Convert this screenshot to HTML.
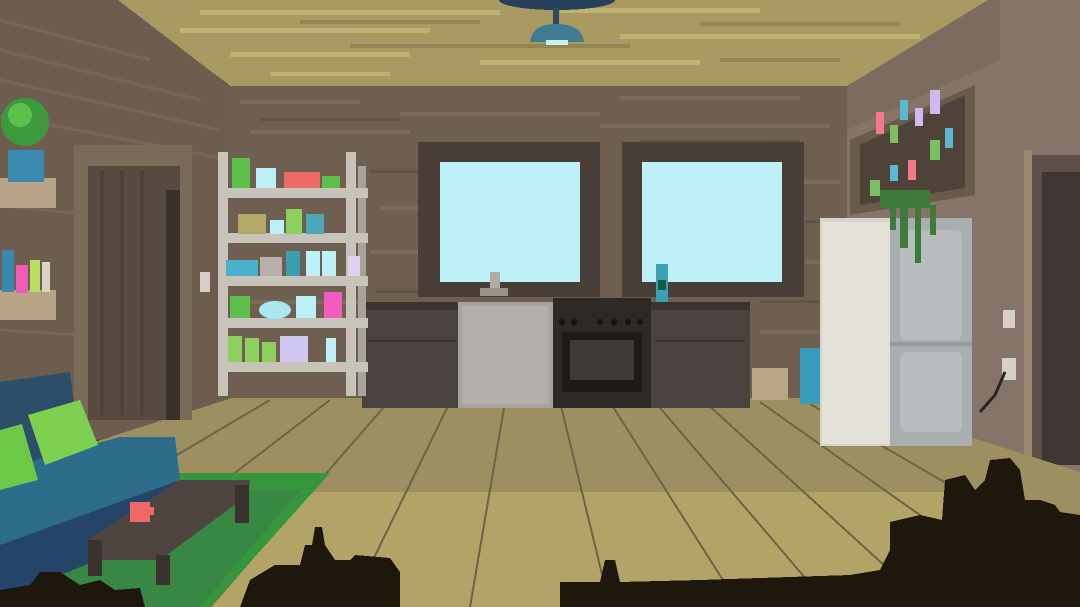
<!DOCTYPE html>
<html><head><meta charset="utf-8"><style>html,body{margin:0;padding:0;background:#000;overflow:hidden}svg{display:block}</style></head>
<body>
<svg width="1080" height="607" viewBox="0 0 1080 607" xmlns="http://www.w3.org/2000/svg" shape-rendering="crispEdges">
<!-- left wall -->
<polygon points="0,0 120,0 232,88 232,400 0,470" fill="#6c5d4f"/>
<g stroke="#7f6e5a" stroke-width="3" opacity="0.7">
<line x1="0" y1="20" x2="150" y2="60"/><line x1="0" y1="50" x2="200" y2="100"/><line x1="0" y1="80" x2="220" y2="130"/><line x1="0" y1="115" x2="230" y2="160"/><line x1="0" y1="205" x2="90" y2="215"/><line x1="0" y1="330" x2="80" y2="335"/>
</g>
<!-- back wall -->
<rect x="230" y="85" width="617" height="318" fill="#6e5f50"/>
<g fill="#806f5c" opacity="0.8">
<rect x="240" y="100" width="120" height="4"/><rect x="400" y="112" width="200" height="4"/><rect x="620" y="96" width="180" height="4"/><rect x="250" y="130" width="160" height="4"/><rect x="600" y="124" width="230" height="4"/><rect x="380" y="206" width="40" height="4"/><rect x="800" y="180" width="40" height="4"/><rect x="370" y="250" width="50" height="4"/><rect x="805" y="260" width="40" height="4"/><rect x="250" y="300" width="110" height="4"/><rect x="760" y="330" width="80" height="4"/>
</g>
<g fill="#5e5044" opacity="0.8">
<rect x="260" y="118" width="140" height="3"/><rect x="640" y="140" width="160" height="3"/><rect x="370" y="170" width="50" height="3"/><rect x="805" y="220" width="40" height="3"/><rect x="375" y="290" width="45" height="3"/><rect x="760" y="300" width="60" height="3"/>
</g>
<!-- right wall -->
<polygon points="985,0 1080,0 1080,475 847,402 847,85" fill="#857467"/>
<polygon points="847,85 985,0 1000,0 1000,60 847,130" fill="#7c6c60"/>
<rect x="1028" y="155" width="52" height="310" fill="#5e5048"/>
<rect x="1042" y="172" width="38" height="293" fill="#3e3632"/>
<rect x="1024" y="150" width="8" height="320" fill="#9a876f"/>
<!-- ceiling -->
<polygon points="118,0 988,0 847,86 230,86" fill="#a89a60"/>
<g fill="#c0b274">
<rect x="200" y="10" width="300" height="5"/><rect x="560" y="8" width="200" height="5"/><rect x="180" y="28" width="250" height="5"/><rect x="620" y="34" width="300" height="5"/><rect x="230" y="52" width="180" height="5"/><rect x="480" y="60" width="220" height="5"/><rect x="270" y="72" width="120" height="4"/>
</g>
<g fill="#938553">
<rect x="300" y="20" width="180" height="4"/><rect x="700" y="22" width="200" height="4"/><rect x="350" y="44" width="280" height="4"/><rect x="720" y="58" width="120" height="4"/>
</g>
<!-- lamp -->
<ellipse cx="557" cy="0" rx="58" ry="10" fill="#26405c"/>
<rect x="553" y="8" width="6" height="20" fill="#2a4a64"/>
<path d="M530 42 Q532 24 556 24 Q582 24 584 42 Z" fill="#3d7c92"/>
<rect x="546" y="40" width="22" height="5" fill="#c8eef2"/>
<!-- floor -->
<polygon points="0,472 232,398 847,398 1080,472 1080,607 0,607" fill="#9d8f60"/>
<polygon points="0,560 120,492 960,492 1080,540 1080,607 0,607" fill="#b2a466"/>
<g stroke="#6f6347" stroke-width="2" fill="none">
<line x1="270" y1="400" x2="-80" y2="607"/><line x1="330" y1="400" x2="60" y2="607"/><line x1="390" y1="400" x2="210" y2="607"/><line x1="450" y1="402" x2="350" y2="607"/><line x1="505" y1="402" x2="470" y2="607"/><line x1="560" y1="402" x2="610" y2="607"/><line x1="610" y1="402" x2="740" y2="607"/><line x1="655" y1="402" x2="830" y2="607"/><line x1="705" y1="402" x2="930" y2="607"/><line x1="760" y1="402" x2="1050" y2="607"/><line x1="810" y1="404" x2="1130" y2="590"/>
</g>
<!-- windows -->
<rect x="418" y="142" width="182" height="155" fill="#4a3e38"/>
<rect x="440" y="162" width="140" height="120" fill="#bdf1f7"/>
<rect x="622" y="142" width="182" height="155" fill="#4a3e38"/>
<rect x="642" y="162" width="140" height="120" fill="#bdf1f7"/>
<!-- counter -->
<rect x="362" y="302" width="388" height="106" fill="#4a423e"/>
<rect x="362" y="302" width="388" height="8" fill="#3a3330"/>
<rect x="368" y="340" width="88" height="2" fill="#3a3330"/><rect x="655" y="340" width="90" height="2" fill="#3a3330"/>
<rect x="458" y="302" width="95" height="106" fill="#a6a39f"/>
<rect x="462" y="306" width="87" height="98" fill="#b3b0ac"/>
<rect x="553" y="298" width="98" height="110" fill="#2e2826"/>
<rect x="562" y="332" width="80" height="60" fill="#1e1a18"/>
<rect x="570" y="340" width="64" height="40" fill="#3e3a38"/>
<g fill="#171210"><circle cx="562" cy="322" r="3"/><circle cx="574" cy="322" r="3"/><circle cx="600" cy="322" r="3"/><circle cx="614" cy="322" r="3"/><circle cx="628" cy="322" r="3"/><circle cx="640" cy="322" r="3"/></g>
<rect x="490" y="272" width="10" height="24" fill="#b3aaa2"/><rect x="480" y="288" width="28" height="8" fill="#9a928a"/>
<rect x="656" y="264" width="12" height="38" fill="#3aa0b8"/><rect x="658" y="280" width="8" height="10" fill="#1a5a40"/>
<!-- box & bin right -->
<rect x="752" y="368" width="36" height="32" fill="#baa686"/>
<rect x="800" y="348" width="22" height="56" fill="#3a9cbc"/>
<!-- fridge -->
<rect x="820" y="218" width="152" height="228" fill="#d6d3c8"/>
<rect x="822" y="222" width="70" height="222" fill="#e4e1d8"/>
<rect x="890" y="218" width="82" height="228" fill="#a9aeb0"/>
<rect x="900" y="230" width="62" height="110" rx="6" fill="#b7bcbe"/>
<rect x="900" y="352" width="62" height="80" rx="6" fill="#b7bcbe"/>
<rect x="890" y="342" width="82" height="4" fill="#969a9c"/>
<!-- right shelf with bottles -->
<polygon points="850,140 975,85 975,195 850,215" fill="#6a5a48"/>
<polygon points="860,145 965,95 965,188 860,205" fill="#4f4238"/>
<g fill="#f07a8a"><rect x="876" y="112" width="8" height="22"/><rect x="908" y="160" width="8" height="20"/></g>
<g fill="#7ac060"><rect x="890" y="125" width="8" height="18"/><rect x="930" y="140" width="10" height="20"/><rect x="870" y="180" width="10" height="16"/></g>
<g fill="#d0b8f0"><rect x="930" y="90" width="10" height="24"/><rect x="915" y="108" width="8" height="18"/></g>
<g fill="#5ab8d0"><rect x="900" y="100" width="8" height="20"/><rect x="945" y="128" width="8" height="20"/><rect x="890" y="165" width="8" height="16"/></g>
<g fill="#3e7a3a"><rect x="880" y="190" width="50" height="18"/><rect x="900" y="208" width="8" height="40"/><rect x="915" y="208" width="6" height="55"/><rect x="930" y="205" width="6" height="30"/><rect x="890" y="205" width="6" height="25"/></g>
<!-- outlet and cord -->
<rect x="1003" y="310" width="12" height="18" fill="#d8d0c4"/>
<rect x="1002" y="358" width="14" height="22" fill="#d8d0c4"/>
<path d="M1005 372 L995 395 L980 412" stroke="#2a2422" stroke-width="3" fill="none"/>
<!-- left door -->
<rect x="74" y="145" width="118" height="275" fill="#7a6a58"/>
<rect x="88" y="166" width="92" height="254" fill="#584a40"/>
<rect x="166" y="190" width="14" height="230" fill="#3a302a"/>
<g fill="#4e4238"><rect x="100" y="170" width="4" height="245"/><rect x="120" y="170" width="4" height="245"/><rect x="140" y="170" width="4" height="245"/></g>
<rect x="200" y="272" width="10" height="20" fill="#d8d0c4"/>
<!-- left shelves with plant & books -->
<rect x="0" y="178" width="56" height="30" fill="#b7a486"/>
<rect x="8" y="150" width="36" height="32" fill="#3a8ab0"/>
<circle cx="25" cy="122" r="24" fill="#3c9a3c"/><circle cx="20" cy="115" r="12" fill="#5cc04a"/>
<rect x="0" y="290" width="56" height="30" fill="#b7a486"/>
<rect x="2" y="250" width="12" height="42" fill="#3a8ab0"/><rect x="16" y="265" width="12" height="28" fill="#f05ab8"/><rect x="30" y="260" width="10" height="32" fill="#b8e060"/><rect x="42" y="262" width="8" height="30" fill="#d8d2c8"/>
<!-- metal shelf -->
<g fill="#c9c4ba">
<rect x="218" y="152" width="10" height="244"/><rect x="346" y="152" width="10" height="244"/><rect x="358" y="166" width="8" height="230" fill="#a9a49a"/>
<rect x="218" y="188" width="150" height="10"/><rect x="218" y="233" width="150" height="10"/><rect x="218" y="276" width="150" height="10"/><rect x="218" y="318" width="150" height="10"/><rect x="218" y="362" width="150" height="10"/>
</g>
<g>
<rect x="232" y="158" width="18" height="30" fill="#5ec04a"/><rect x="256" y="168" width="20" height="20" fill="#bdf1f7"/><rect x="284" y="172" width="36" height="16" fill="#ee6a66"/><rect x="322" y="176" width="18" height="12" fill="#5ec04a"/>
<rect x="238" y="214" width="28" height="20" fill="#b5a96a"/><rect x="270" y="220" width="14" height="14" fill="#bdf1f7"/><rect x="286" y="209" width="16" height="25" fill="#8ed060"/><rect x="306" y="214" width="18" height="20" fill="#4aa8b8"/>
<rect x="226" y="260" width="32" height="16" fill="#4ab0cc"/><rect x="260" y="257" width="22" height="19" fill="#b8b0a8"/><rect x="286" y="251" width="14" height="25" fill="#3aa0b0"/><rect x="306" y="251" width="14" height="25" fill="#bdf1f7"/><rect x="322" y="251" width="14" height="25" fill="#bdf1f7"/><rect x="348" y="256" width="12" height="20" fill="#e0d0f0"/>
<rect x="230" y="296" width="20" height="22" fill="#5ec04a"/><ellipse cx="275" cy="310" rx="16" ry="9" fill="#a8e8f0"/><rect x="296" y="296" width="20" height="22" fill="#bdf1f7"/><rect x="324" y="292" width="18" height="26" fill="#f25cc0"/>
<rect x="228" y="336" width="14" height="26" fill="#8ed060"/><rect x="245" y="338" width="14" height="24" fill="#8ed060"/><rect x="262" y="342" width="14" height="20" fill="#8ed060"/><rect x="280" y="336" width="28" height="26" fill="#d0c8f0"/><rect x="326" y="338" width="10" height="24" fill="#bdf1f7"/>
</g>
<!-- rug -->
<polygon points="0,560 170,473 330,473 210,607 0,607" fill="#35963e"/>
<polygon points="20,575 170,490 300,490 200,607 20,607" fill="#3b7a48" opacity="0.5"/>
<!-- sofa -->
<polygon points="0,382 70,372 80,450 0,470" fill="#2c4e68"/>
<polygon points="0,470 120,437 175,437 180,480 0,545" fill="#2d6d8b"/>
<polygon points="0,545 180,480 182,525 0,600" fill="#25446a"/>
<polygon points="28,415 80,400 98,445 45,465" fill="#7ed050"/>
<polygon points="0,430 22,424 38,480 0,490" fill="#6ec848"/>
<!-- table -->
<polygon points="88,540 180,480 250,480 248,495 160,560 88,560" fill="#4e4440"/>
<rect x="88" y="540" width="14" height="36" fill="#3a322e"/><rect x="156" y="555" width="14" height="30" fill="#3a322e"/><rect x="235" y="485" width="14" height="38" fill="#3a322e"/>
<rect x="130" y="502" width="20" height="20" fill="#f06868"/><rect x="148" y="507" width="6" height="8" fill="#f06868"/>
<!-- silhouettes -->
<g fill="#1e180c">
<polygon points="0,607 0,590 30,585 40,572 60,572 80,585 100,580 115,590 140,588 145,607"/>
<polygon points="240,607 250,580 275,565 300,565 305,545 312,545 315,527 322,527 325,545 335,560 350,560 355,555 390,558 400,572 400,607"/>
<polygon points="560,607 560,582 600,582 605,560 615,560 620,582 700,580 850,575 880,570 890,550 890,522 920,515 942,520 945,480 965,475 975,490 985,480 990,460 1010,458 1020,470 1025,500 1040,500 1055,505 1060,512 1080,515 1080,607"/>
</g>
</svg>
</body></html>
